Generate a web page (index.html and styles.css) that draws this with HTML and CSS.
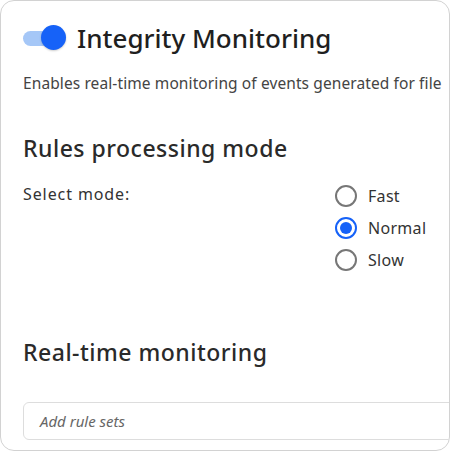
FILE: index.html
```html
<!DOCTYPE html>
<html lang="en">
<head>
    <meta charset="UTF-8">
    <meta name="viewport" content="width=device-width, initial-scale=1.0">
    <title>Integrity Monitoring</title>
    <link rel="stylesheet" href="styles.css">
</head>
<body>
    <div class="card">
        <div class="inner">
            <div class="header">
                <div class="toggle">
                    <div class="toggle-track"></div>
                    <div class="toggle-knob"></div>
                </div>
                <h1>Integrity Monitoring</h1>
            </div>
            <p class="description">Enables real-time monitoring of events generated for file</p>

            <h2>Rules processing mode</h2>
            <div class="mode-row">
                <div class="mode-label">Select mode:</div>
                <div class="radio-group">
                    <label class="radio"><span class="radio-circle"></span>Fast</label>
                    <label class="radio"><span class="radio-circle checked"></span>Normal</label>
                    <label class="radio"><span class="radio-circle"></span>Slow</label>
                </div>
            </div>

            <h2 class="realtime">Real-time monitoring</h2>
            <div class="rule-input">Add rule sets</div>
        </div>
    </div>
</body>
</html>
```
FILE: styles.css
```css
body {
    margin: 0;
    background-color: white;
    font-family: "Noto Sans", sans-serif;
    color: #222;
}
.card {
    width: 450px;
    height: 451px;
    box-sizing: border-box;
    border: 1px solid #d2d2d2;
    border-radius: 14px;
    overflow: hidden;
    padding: 24px 0 0 22px;
}
.inner {
    width: 640px;
}
.header {
    display: flex;
    align-items: center;
    gap: 11px;
    height: 26px;
}
.toggle {
    position: relative;
    width: 43px;
    height: 26px;
    flex-shrink: 0;
}
.toggle-track {
    position: absolute;
    left: 0;
    top: 6px;
    width: 38px;
    height: 15px;
    border-radius: 8px;
    background-color: #a5c7f7;
}
.toggle-knob {
    position: absolute;
    right: 0;
    top: 0;
    width: 25px;
    height: 25px;
    border-radius: 50%;
    background-color: #1662f8;
    box-shadow: 0 1px 2px rgba(0, 0, 0, 0.2);
}
h1 {
    margin: 0;
    font-size: 26px;
    font-weight: 500;
    line-height: 26px;
    color: #1f1f1f;
}
.description {
    margin: 22px 0 0 0;
    font-size: 15.5px;
    letter-spacing: 0.1px;
    line-height: 20px;
    color: #444;
    white-space: nowrap;
}
h2 {
    margin: 41px 0 0 0;
    font-size: 23px;
    font-weight: 500;
    letter-spacing: 0.5px;
    line-height: 28px;
    color: #2a2a2a;
}
.mode-row {
    display: grid;
    grid-template-columns: 312px auto;
    margin-top: 22px;
}
.mode-label {
    font-size: 16px;
    letter-spacing: 0.9px;
    line-height: 20px;
    color: #333;
}
.radio-group {
    display: flex;
    flex-direction: column;
    gap: 10px;
    margin-top: 1px;
}
.radio {
    display: flex;
    align-items: center;
    gap: 11px;
    font-size: 16px;
    letter-spacing: 0.3px;
    line-height: 22px;
    color: #333;
}
.radio-circle {
    width: 18px;
    height: 18px;
    border: 2px solid #777;
    border-radius: 50%;
    box-sizing: content-box;
    position: relative;
}
.radio-circle.checked {
    border-color: #1662f8;
}
.radio-circle.checked::after {
    content: "";
    position: absolute;
    left: 3px;
    top: 3px;
    width: 12px;
    height: 12px;
    border-radius: 50%;
    background-color: #1662f8;
}
.realtime {
    margin-top: 67px;
}
.rule-input {
    margin-top: 36px;
    height: 38px;
    box-sizing: border-box;
    border: 1px solid #ddd;
    border-radius: 6px;
    padding: 0 16px;
    display: flex;
    align-items: center;
    font-size: 15px;
    font-style: italic;
    color: #666;
}
```
